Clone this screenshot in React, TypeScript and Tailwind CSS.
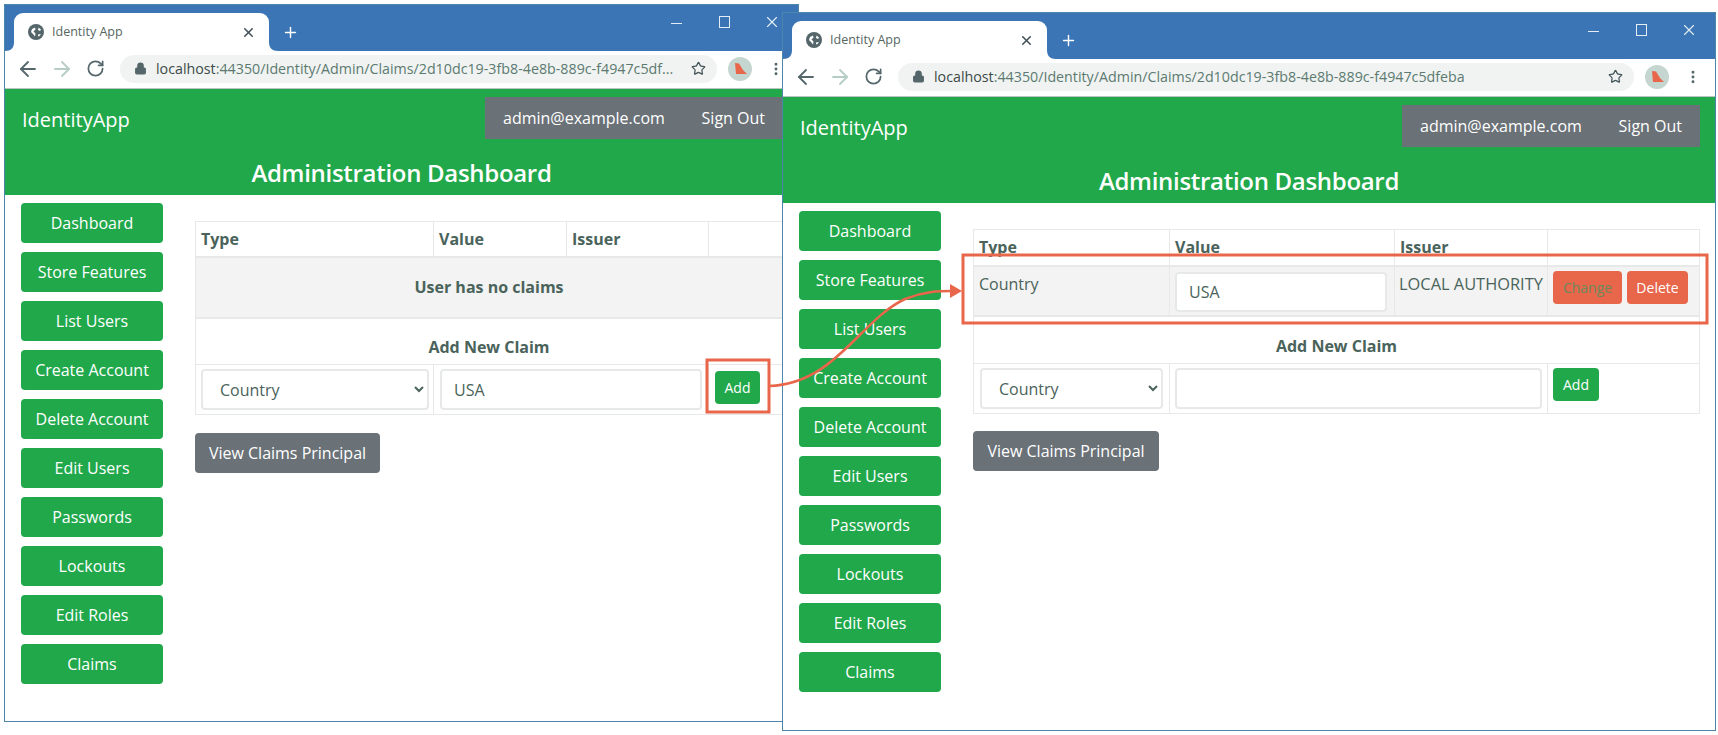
import React from 'react';
import { ArrowLeft, ArrowRight, Lock, MoreVertical, Plus, RotateCw, Star, X } from 'lucide-react';

const navItems = [
  'Dashboard',
  'Store Features',
  'List Users',
  'Create Account',
  'Delete Account',
  'Edit Users',
  'Passwords',
  'Lockouts',
  'Edit Roles',
  'Claims',
];

const cellText = 'text-[#4a635b]';

const Globe = () => (
  <svg width="16" height="16" viewBox="0 0 16 16" className="shrink-0">
    <circle cx="8" cy="8" r="8" fill="#54666a" />
    <path d="M4 5 7 3.5 7.5 5.5 5.5 7.5 7.5 9.5 7 12.5 5 10 3 8ZM10.5 3.5 13 5.5 12 7 10 6ZM10 10.5 13 10 11 12.5 10 12Z" fill="#fff" />
  </svg>
);

const Avatar = () => (
  <svg width="24" height="24" viewBox="0 0 24 24" className="shrink-0">
    <circle cx="12" cy="12" r="12" fill="#c5d6d0" />
    <path d="M7 6 L11 6.5 L15 13 L19 17 L8 17 Z" fill="#e8664a" />
  </svg>
);

const Browser = ({ className, url, children }: { className: string; url: React.ReactNode; children: React.ReactNode }) => (
  <div className={`absolute flex flex-col bg-white border border-[#4c86ad] ${className}`}>
    <div className="relative flex h-[46px] shrink-0 bg-[#3b75b5] pl-[9px] pt-[8px]">
      <div className="relative flex h-[38px] w-[255px] items-center rounded-t-[9px] bg-white pl-[14px] pr-[13px]">
        <Globe />
        <span className="ml-[8px] flex-1 text-[12.5px] text-[#55675f]">Identity App</span>
        <X size={15} strokeWidth={2.5} className="text-[#44525a]" />
        <svg width="9" height="9" viewBox="0 0 9 9" className="absolute bottom-0 left-[-9px]">
          <path d="M9 0 C9 6 6 9 0 9 L9 9 Z" fill="#fff" />
        </svg>
        <svg width="9" height="9" viewBox="0 0 9 9" className="absolute bottom-0 right-[-9px]">
          <path d="M0 0 C0 6 3 9 9 9 L0 9 Z" fill="#fff" />
        </svg>
      </div>
      <Plus size={17} strokeWidth={2} className="ml-[13px] mt-[11px] text-white" />
      <div className="ml-auto flex pr-[17px] pt-[3px] text-[#e4eef5]">
        <div className="mt-[7px] h-[1px] w-[11px] bg-[#e4eef5]" />
        <div className="ml-[37px] h-[12px] w-[11px] border border-[#e4eef5]" />
        <X size={18} strokeWidth={1.5} className="ml-[33px] mt-[-3px]" />
      </div>
    </div>
    <div className="flex h-[38px] shrink-0 items-center border-b border-[#b9c6c1] bg-white pb-[2px] pl-[11px] pr-[14px]">
      <ArrowLeft size={24} strokeWidth={1.8} className="shrink-0 text-[#55676b]" />
      <ArrowRight size={24} strokeWidth={1.8} className="ml-[10px] shrink-0 text-[#b6cdc6]" />
      <RotateCw size={19} strokeWidth={2.2} className="ml-[12px] shrink-0 text-[#55676b]" />
      <div className="ml-[15px] flex h-[28px] flex-1 items-center overflow-hidden rounded-full bg-[#f0f3f2] pl-[14px] pr-[11px]">
        <Lock size={13} strokeWidth={2} fill="#54666a" className="shrink-0 text-[#54666a]" />
        <span className="ml-[9px] flex-1 whitespace-nowrap text-[14.25px] text-[#5c7a70]">{url}</span>
        <Star size={15} strokeWidth={2} className="shrink-0 text-[#44555a]" />
      </div>
      <div className="ml-[11px]"><Avatar /></div>
      <MoreVertical size={16} strokeWidth={2.4} className="ml-[16px] shrink-0 text-[#55676b]" />
    </div>
    <div className="flex h-[106px] shrink-0 flex-col bg-[#21a84b] text-white">
      <div className="flex items-start justify-between pl-[17px] pr-[15px] pt-[8px]">
        <span className="text-[20px] leading-[46px]">IdentityApp</span>
        <div className="flex h-[42px] w-[298px] items-center justify-between bg-[#6a7177] pl-[18px] pr-[18px] text-[16px]">
          <span>admin@example.com</span>
          <span>Sign Out</span>
        </div>
      </div>
      <div className="mt-[12px] text-center text-[24px] leading-[36px] font-semibold tracking-[-0.3px]">Administration Dashboard</div>
    </div>
    <div className="flex flex-1 items-start pl-[16px] pr-[15px] pt-[8px]">
      <div className="flex w-[142px] shrink-0 flex-col gap-[9px]">
        {navItems.map((item) => (
          <div key={item} className="flex h-[40px] items-center justify-center rounded bg-[#21a84b] text-[16px] text-white">
            {item}
          </div>
        ))}
      </div>
      <div className="ml-[32px] min-w-0 flex-1">{children}</div>
    </div>
  </div>
);

const Input = ({ value, className }: { value?: string; className: string }) => (
  <div className={`flex items-center rounded border-2 border-[#e6e9e8] bg-white pl-[12px] text-[16px] ${cellText} ${className}`}>
    {value}
  </div>
);

const CountrySelect = ({ className }: { className: string }) => (
  <select
    defaultValue="Country"
    className={`rounded border-2 border-[#e6e9e8] bg-white pl-[13px] text-[16px] ${cellText} ${className}`}
  >
    <option>Country</option>
  </select>
);

const thClass = `border border-[#e6e9e8] pl-[5px] text-left text-[16px] font-bold ${cellText}`;
const tdClass = 'border border-[#e6e9e8] align-top';

const App: React.FC = () => {
  return (
    <div className="relative h-[735px] w-[1718px] overflow-hidden bg-white font-['Open_Sans',sans-serif]">
      <Browser
        className="left-[4px] top-[4px] h-[718px] w-[795px]"
        url={
          <>
            <span className="text-[#3c4a48]">localhost</span>:44350/Identity/Admin/Claims/2d10dc19-3fb8-4e8b-889c-f4947c5df...
          </>
        }
      >
        <table className="mt-[18px] w-[588px] table-fixed border-collapse">
          <colgroup>
            <col className="w-[238px]" />
            <col className="w-[133px]" />
            <col className="w-[142px]" />
            <col />
          </colgroup>
          <tbody>
            <tr className="h-[35px]">
              <th className={thClass}>Type</th>
              <th className={thClass}>Value</th>
              <th className={thClass}>Issuer</th>
              <th className={thClass}></th>
            </tr>
            <tr className="h-[61px] bg-[#f2f3f2]">
              <td colSpan={4} className={`border border-t-2 border-[#e6e9e8] text-center text-[16px] font-bold ${cellText}`}>
                User has no claims
              </td>
            </tr>
            <tr className="h-[47px]">
              <td colSpan={4} className={`border border-t-2 border-[#e6e9e8] pt-[11px] text-center text-[16px] font-bold ${cellText}`}>
                Add New Claim
              </td>
            </tr>
            <tr className="h-[50px]">
              <td className={`${tdClass} pl-[5px] pt-[4px]`}>
                <CountrySelect className="h-[41px] w-[228px]" />
              </td>
              <td colSpan={2} className={`${tdClass} pl-[6px] pt-[4px]`}>
                <Input value="USA" className="h-[41px] w-[262px]" />
              </td>
              <td className={`${tdClass} pl-[6px] pt-[6px]`}>
                <div className="flex h-[33px] w-[45px] items-center justify-center rounded bg-[#21a84b] text-[14px] text-white">Add</div>
              </td>
            </tr>
          </tbody>
        </table>
        <div className="mt-[18px] flex h-[40px] w-[185px] items-center justify-center rounded bg-[#6a7177] text-[16px] text-white">
          View Claims Principal
        </div>
      </Browser>

      <Browser
        className="left-[782px] top-[12px] h-[719px] w-[934px]"
        url={
          <>
            <span className="text-[#3c4a48]">localhost</span>:44350/Identity/Admin/Claims/2d10dc19-3fb8-4e8b-889c-f4947c5dfeba
          </>
        }
      >
        <table className="mt-[18px] w-[727px] table-fixed border-collapse">
          <colgroup>
            <col className="w-[196px]" />
            <col className="w-[225px]" />
            <col className="w-[153px]" />
            <col />
          </colgroup>
          <tbody>
            <tr className="h-[36px]">
              <th className={thClass}>Type</th>
              <th className={thClass}>Value</th>
              <th className={thClass}>Issuer</th>
              <th className={thClass}></th>
            </tr>
            <tr className="h-[50px] bg-[#f2f3f2]">
              <td className={`${tdClass} border-t-2 pl-[5px] pt-[5px] text-[16px] ${cellText}`}>Country</td>
              <td className={`${tdClass} border-t-2 pl-[5px] pt-[5px]`}>
                <Input value="USA" className="h-[40px] w-[212px]" />
              </td>
              <td className={`${tdClass} border-t-2 pl-[4px] pt-[5px] text-[16.4px] whitespace-nowrap ${cellText}`}>LOCAL AUTHORITY</td>
              <td className={`${tdClass} border-t-2 pl-[5px] pt-[4px]`}>
                <div className="flex gap-[5px] text-[14px]">
                  <div className="flex h-[33px] w-[69px] items-center justify-center rounded bg-[#e8664a] text-[#6b8a5c]">Change</div>
                  <div className="flex h-[33px] w-[61px] items-center justify-center rounded bg-[#e8664a] text-white">Delete</div>
                </div>
              </td>
            </tr>
            <tr className="h-[48px]">
              <td colSpan={4} className={`border border-t-2 border-[#e6e9e8] pt-[12px] text-center text-[16px] font-bold ${cellText}`}>
                Add New Claim
              </td>
            </tr>
            <tr className="h-[50px]">
              <td className={`${tdClass} pl-[6px] pt-[4px]`}>
                <CountrySelect className="h-[41px] w-[183px]" />
              </td>
              <td colSpan={2} className={`${tdClass} pl-[5px] pt-[4px]`}>
                <Input className="h-[41px] w-[367px]" />
              </td>
              <td className={`${tdClass} pl-[5px] pt-[4px]`}>
                <div className="flex h-[33px] w-[46px] items-center justify-center rounded bg-[#21a84b] text-[14px] text-white">Add</div>
              </td>
            </tr>
          </tbody>
        </table>
        <div className="mt-[17px] flex h-[40px] w-[186px] items-center justify-center rounded bg-[#6a7177] text-[16px] text-white">
          View Claims Principal
        </div>
      </Browser>

      {/* callout drawn over both windows */}
      <svg width="1718" height="735" viewBox="0 0 1718 735" fill="none" className="pointer-events-none absolute left-0 top-0">
        <rect x="707" y="360" width="62" height="52" stroke="#e8664a" strokeWidth="3" />
        <rect x="963" y="255" width="744" height="68" stroke="#e8664a" strokeWidth="3" />
        <path d="M769 386 C835 384 860 320 905 299 C925 291 940 291 952 291" stroke="#e8664a" strokeWidth="2.5" />
        <path d="M950 284 L962 291 L950 298 Z" fill="#e8664a" />
      </svg>
    </div>
  );
};

export default App;
